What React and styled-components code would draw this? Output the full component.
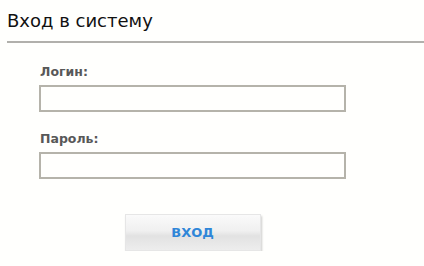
import * as React from "react";
import styled, { createGlobalStyle } from "styled-components";

const GlobalStyle = createGlobalStyle`
  body {
    margin: 0;
    background: #fffffd;
    font-family: "DejaVu Sans", Verdana, sans-serif;
  }
`;

const Header = styled.h1`
  margin: 0 0 0 7px;
  padding: 9px 0 8px;
  font-size: 18px;
  font-weight: normal;
  line-height: 24px;
  color: #111;
  border-bottom: 2px solid #b1b0ac;
`;

const Form = styled.form`
  display: flex;
  flex-direction: column;
  width: 307px;
  margin: 21px 0 0 39px;
`;

const Field = styled.div`
  display: flex;
  flex-direction: column;
  gap: 5px;
  margin-bottom: ${({ last }) => (last ? "35px" : "19px")};
`;

const Label = styled.label`
  font-size: 12.5px;
  font-weight: bold;
  color: #585858;
  padding-left: 1px;
  line-height: 16px;
`;

const Input = styled.input`
  box-sizing: border-box;
  height: 27px;
  width: 100%;
  border: 2px solid #b5b3aa;
  background: #fffffd;
  outline: none;
  margin: 0;
`;

const Button = styled.button`
  align-self: center;
  width: 136px;
  height: 37px;
  border: 1px solid #e6e6e6;
  background: linear-gradient(#fafafa 0%, #f0f0f0 45%, #e2e2e2 60%, #ededed 100%);
  box-shadow: 1px 2px 2px rgba(0, 0, 0, 0.2);
  color: #2f86d8;
  font-family: "DejaVu Sans", Verdana, sans-serif;
  font-weight: bold;
  font-size: 13px;
  cursor: pointer;
`;

export default function App() {
  return (
    <>
      <GlobalStyle />
      <Header>Вход в систему</Header>
      <Form onSubmit={(e) => e.preventDefault()}>
        <Field>
          <Label>Логин:</Label>
          <Input type="text" />
        </Field>
        <Field last>
          <Label>Пароль:</Label>
          <Input type="password" />
        </Field>
        <Button type="submit">ВХОД</Button>
      </Form>
    </>
  );
}
